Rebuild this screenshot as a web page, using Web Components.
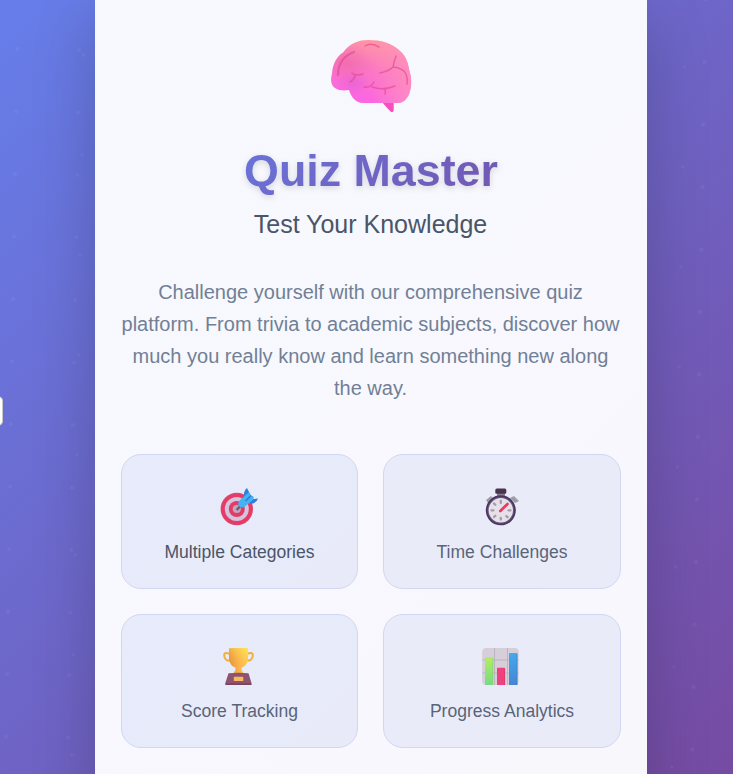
<!DOCTYPE html>
<html lang="en">
<head>
<meta charset="utf-8">
<title>Quiz Master</title>
<style>
html,body{margin:0;height:774px;overflow:hidden;font-family:"Liberation Sans",Arial,sans-serif}
</style>
</head>
<body>
<quiz-page>
  <quiz-icon name="brain" slot="logo"></quiz-icon>
  <span slot="title">Quiz Master</span>
  <span slot="subtitle">Test Your Knowledge</span>
  <span slot="description">Challenge yourself with our comprehensive quiz<br>platform. From trivia to academic subjects, discover how<br>much you really know and learn something new along<br>the way.</span>
  <feature-card icon="target">Multiple Categories</feature-card>
  <feature-card icon="timer" soft>Time Challenges</feature-card>
  <feature-card icon="trophy" soft>Score Tracking</feature-card>
  <feature-card icon="chart" soft>Progress Analytics</feature-card>
</quiz-page>
<script>
const brainShape = 'M15 58C10.500 55 10.500 49 12 44C12.500 35 16 27 23 22.500C30 13 39 10 48 10C61 10 72 13 80 21C87 27 88 34 89.500 41C92 49 92 60 87.500 67Q84 73 77 73H43C36 73 31 67 29 60C24 61 18 60.500 15 58Z';
const icons = {
brain: `<svg viewBox="0 0 100 90"><defs>
<linearGradient id="g" x1=".7" y1="0" x2=".45" y2=".95"><stop stop-color="#ff9a9f"/><stop offset=".5" stop-color="#fb78c2"/><stop offset="1" stop-color="#fb66e2"/></linearGradient>
<linearGradient id="r" x1="0" x2="1"><stop offset=".5" stop-color="#ff8fc0" stop-opacity="0"/><stop offset="1" stop-color="#ff8fc0" stop-opacity=".85"/></linearGradient>
<radialGradient id="d" cx=".2" cy=".36" r=".32"><stop stop-color="#e8609f" stop-opacity=".5"/><stop offset="1" stop-color="#e8609f" stop-opacity="0"/></radialGradient>
<radialGradient id="v" cx=".28" cy=".68" r=".2"><stop stop-color="#cf58d8" stop-opacity=".4"/><stop offset="1" stop-color="#cf58d8" stop-opacity="0"/></radialGradient>
<filter id="b" x="-10%" y="-10%" width="120%" height="120%"><feGaussianBlur stdDeviation=".7"/></filter></defs>
<path d="M62 72L73.700 72V80.500Q73 83 70.500 81.500Q66 77 62 72Z" fill="#f84dbd"/>
<path d="${brainShape}" fill="url(#g)"/><path d="${brainShape}" fill="url(#r)"/><path d="${brainShape}" fill="url(#d)"/><path d="${brainShape}" fill="url(#v)"/>
<g fill="none" stroke="#e04a90" stroke-opacity=".65" stroke-width="1.500" stroke-linecap="round" filter="url(#b)"><path d="M18 45Q18 28 34 22" stroke-width="2.200"/><path d="M45 16Q51 12 59 17M32 43Q35 46.500 43 44M35 46Q34 50 30 52M60 43Q69 41 73 37Q74 31 76 26M73 37Q83 38 86 44Q88 49 87 54M44 57Q51 58 54 52M52 57Q63 61 75 56M64 59Q66 60 65 64"/></g></svg>`,
target: `<svg viewBox="0 0 60 50"><circle cx="26.800" cy="29" r="16.200" fill="#d94870"/><circle cx="26.800" cy="29.300" r="15" fill="#e93966"/><circle cx="26.800" cy="29" r="12" fill="#d2c5dc"/><circle cx="26.800" cy="29" r="8" fill="#e53968"/><circle cx="26.800" cy="29" r="4.100" fill="#bda8bd"/><path d="M26.700 30L32 24" stroke="#735c76" stroke-width="2.500"/><path d="M34 19L34 13Q35 9 37 8L39.500 13L37 20ZM40 22L43 19L48 18.500Q47 22 43 23.500L38 24Z" fill="#2f7fe0"/><path d="M28 24Q29 20 33 17.500L38.500 12.500Q41 13 40.500 15.500Q43.500 15 44 18L39.500 23L34 27Q29 28.500 28 24Z" fill="#45b2f4"/><path d="M36 20.500L40.500 16" stroke="#2a80d4" stroke-width="1.700" stroke-linecap="round"/></svg>`,
timer: `<svg viewBox="0 0 60 50"><path d="M12 20L17 16L20 19L14 23ZM36 18L40 16L45 21L41 23Z" fill="#a09daa"/><path d="M23 13H31V18H23Z" fill="#85828f"/><rect x="21.300" y="8.500" width="11" height="5.300" rx="1.500" fill="#493351"/><circle cx="26.800" cy="30.300" r="15" fill="#4a365f"/><circle cx="26.800" cy="30.300" r="13.300" fill="#66567b"/><circle cx="26.800" cy="30.300" r="12.200" fill="#e5e0e9"/><g stroke="#a29da9" stroke-width="2.300" stroke-linecap="round"><path d="M26.800 21v2M26.800 38v1.500M17.500 30.300h2M34.500 30.300h2M20 23.500l1.300 1.300M32.300 36l1.300 1.300M20 37l1.300-1.300"/></g><path d="M26.300 31L33.500 24" stroke="#ee365e" stroke-width="2.600" stroke-linecap="round"/></svg>`,
trophy: `<svg viewBox="0 0 60 50"><defs><linearGradient id="g"><stop stop-color="#df9038"/><stop offset=".55" stop-color="#ffb64f"/><stop offset="1" stop-color="#ffd450"/></linearGradient><linearGradient id="h" x1=".8" y1="0" x2=".2" y2="1"><stop stop-color="#ffe052"/><stop offset=".9" stop-color="#f29b48" stop-opacity="0"/></linearGradient></defs><path d="M20 14Q13 11 14.500 17Q16 22 22 20M37 14Q44 11 42.500 17Q41 22 35 20" fill="none" stroke="#f0b13e" stroke-width="2"/><path d="M19 8.500Q28.500 7.300 38 8.500V19Q37 26 31.500 27.500V30L34 34H23L25.500 30V27.500Q20 26 19 19Z" fill="url(#g)"/><path d="M19 8.500Q28.500 7.300 38 8.500V19Q37 26 31.500 27.500V30L34 34H23L25.500 30V27.500Q20 26 19 19Z" fill="url(#h)"/><path d="M18.500 33.200Q28.500 32.500 38.500 33.200L41.500 43V45H15.300V43Z" fill="#8e536f"/><path d="M15.800 43.300H41.200V45H15.800Z" fill="#794362"/><rect x="23.800" y="36.800" width="9.500" height="4.300" rx=".7" fill="#f6ba65"/></svg>`,
chart: `<svg viewBox="0 0 60 50"><defs><linearGradient id="g" y1="0" y2="1" x2="0"><stop stop-color="#b2ed61"/><stop offset="1" stop-color="#74dc84"/></linearGradient><linearGradient id="h" y1="0" y2="1" x2="0"><stop stop-color="#45a9ef"/><stop offset="1" stop-color="#4585d3"/></linearGradient></defs><rect x="8.200" y="8" width="36.500" height="37" rx="4" fill="#d6ced9"/><path d="M20.500 8V45M33.500 8V45M8.500 20H44.500M8.500 33H44.500" stroke="#b8b2bf" stroke-width=".9"/><rect x="11" y="17" width="8" height="28" rx=".6" fill="url(#g)"/><path d="M18.700 18V45" stroke="#8bd06c" stroke-width=".6"/><rect x="23" y="27.800" width="8" height="17.200" rx=".6" fill="#ed427e"/><path d="M30.700 28.500V45" stroke="#ce3770" stroke-width=".6"/><rect x="35" y="13" width="8.300" height="32" rx=".6" fill="url(#h)"/><path d="M43 14V45" stroke="#3078bd" stroke-width=".6"/></svg>`
};

class QuizIcon extends HTMLElement {
  constructor(){ super(); this.attachShadow({mode:'open'}); }
  connectedCallback(){
    this.shadowRoot.innerHTML = `<style>:host{display:block;width:60px;height:50px}:host([name=brain]){width:100px;height:90px}svg{display:block;width:100%;height:100%}</style>${icons[this.getAttribute('name')]}`;
  }
}

class FeatureCard extends HTMLElement {
  connectedCallback(){
    this.attachShadow({mode:'open'}).innerHTML = `<style>
:host{display:flex;flex-direction:column;align-items:center;box-sizing:border-box;padding-top:25px;border:1px solid #cfd7f5;border-radius:20px;background:linear-gradient(135deg,#e7ebfb,#e8eaf8);color:#4a5568;font-size:17.550px;line-height:20px;white-space:nowrap}
:host([soft]){color:#5a6478}
:host([icon=timer]),:host([icon=chart]){background:#e9ecf8}
quiz-icon{margin:0 0 12px 1px}
:host([icon=timer]) quiz-icon,:host([icon=chart]) quiz-icon{margin-left:4px}
:host([icon=trophy]) quiz-icon,:host([icon=chart]) quiz-icon{margin-bottom:11px}
</style><quiz-icon name="${this.getAttribute('icon')}"></quiz-icon><span><slot></slot></span>`;
  }
}

class QuizBackdrop extends HTMLElement {
  connectedCallback(){
    const rows = [[17.3,49,62.5,1.04,2.1],[79.3,50,62.5,1.02,2.1],[83.7,55,100,1.7,1.8],[705.8,-.5,62.5,1.12,2.2],[684.6,67,100,1.8,1.8]];
    const dots = rows.flatMap(([x,y,step,drift,r]) => Array.from({length:14},(_,i)=>`<circle cx="${x-i*drift}" cy="${y+i*step}" r="${r}"/>`)).join('');
    this.attachShadow({mode:'open'}).innerHTML = `<style>:host{display:block;position:absolute;inset:0;background:linear-gradient(135deg,#667eea 0%,#764ba2 100%)}svg{display:block}</style><svg width="733" height="774" fill="#fff" fill-opacity=".05">${dots}</svg>`;
  }
}

class QuizPage extends HTMLElement {
  connectedCallback(){
    this.attachShadow({mode:'open'}).innerHTML = `<style>
:host{display:flex;position:relative;width:733px;height:774px;overflow:hidden}
main{position:relative;box-sizing:border-box;width:552px;height:920px;flex:none;margin-left:95px;padding:30px 26px;background:linear-gradient(135deg,#f7f9fe,#f8f7fd 75%,#f8f7fc);box-shadow:0 20px 60px rgba(0,0,0,.2);display:flex;flex-direction:column;align-items:center}
.logo{height:90px;padding-right:2px}
h1{align-self:stretch;text-align:center;margin:24px 0 0;font-size:44.800px;line-height:52px;font-weight:700;background:linear-gradient(135deg,#667eea,#764ba2);-webkit-background-clip:text;background-clip:text;color:transparent;filter:drop-shadow(0 2px 3px rgba(0,0,0,.14));white-space:nowrap}
h2{margin:14px 0 0;font-size:25px;line-height:29px;font-weight:400;color:#4a5568;white-space:nowrap}
p{margin:37px 0 50px;font-size:20px;line-height:32px;color:#718096;text-align:center;white-space:nowrap}
p,h2{padding-right:1px}
.grid{display:grid;grid-template-columns:237px 238px;grid-template-rows:135px 134px;gap:25px;align-self:stretch}
aside{position:absolute;left:-20px;top:396px;width:22px;height:28px;border:1px solid #c9c9c5;border-left:0;border-radius:5px;box-sizing:content-box;background:#fff}
</style><quiz-backdrop></quiz-backdrop><main><div class="logo"><slot name="logo"></slot></div><h1><slot name="title"></slot></h1><h2><slot name="subtitle"></slot></h2><p><slot name="description"></slot></p><div class="grid"><slot></slot></div></main><aside></aside>`;
  }
}
customElements.define('quiz-icon',QuizIcon);
customElements.define('feature-card',FeatureCard);
customElements.define('quiz-backdrop',QuizBackdrop);
customElements.define('quiz-page',QuizPage);
</script>
</body>
</html>
